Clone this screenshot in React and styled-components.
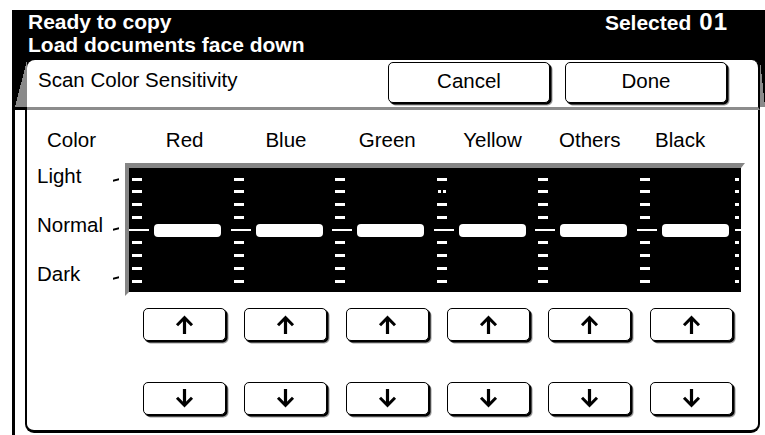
import React from "react";
import styled, { createGlobalStyle, css } from "styled-components";

const GlobalStyle = createGlobalStyle`
  html, body { margin: 0; padding: 0; background: #fff; }
  body { font-family: "Liberation Sans", Arial, Helvetica, sans-serif; color: #000; }
  * { box-sizing: border-box; }
`;

const bevel = css`
  background: #fff;
  border: 1.5px solid #000;
  border-radius: 5px;
  box-shadow: 1.5px 1.5px 0 #000, 2.5px 2.5px 0 #9a9a9a;
  font-family: inherit;
  color: #000;
  padding: 0;
  cursor: pointer;
  display: flex;
  align-items: center;
  justify-content: center;
`;

const Screen = styled.div`
  width: 765px;
  height: 435px;
  padding: 10px 0 0 12px;
  overflow: hidden;
  background: #fff;
`;

const Frame = styled.div`
  width: 753px;
  height: 425px;
  display: flex;
  flex-direction: column;
`;

const StatusBar = styled.header`
  height: 50px;
  flex-shrink: 0;
  background: #000;
  color: #fff;
  display: flex;
  justify-content: space-between;
  align-items: flex-start;
  padding: 0 37px 0 16px;
  font-weight: bold;
  font-size: 21px;
  line-height: 23px;
`;

const Messages = styled.div`
  display: flex;
  flex-direction: column;
`;

const Selected = styled.div`
  display: flex;
  align-items: baseline;
`;

const Count = styled.span`
  font-size: 24px;
  letter-spacing: 1px;
  margin-left: 8px;
`;

const TabArea = styled.div`
  height: 50px;
  flex-shrink: 0;
  display: flex;
  background: linear-gradient(#000 0 10px, #fff 10px);
`;

const LeftWedge = styled.div`
  width: 15px;
  height: 50px;
  border-left: 3px solid #000;
  border-bottom: 3px solid #000;
  background: linear-gradient(to bottom right, #000 50%, #8a8a8a 50%);
`;

const RightWedge = styled.div`
  width: 5px;
  height: 47px;
  background: linear-gradient(to bottom left, #000 50%, #8a8a8a 50%);
`;

const Tab = styled.div`
  width: 733px;
  height: 50px;
  background: #fff;
  border-right: 2px solid #000;
  border-bottom: 3px solid #8c8c8c;
  border-radius: 8px 8px 0 0;
  display: flex;
  align-items: flex-start;
  gap: 15px;
  padding: 0 31px 0 11px;
`;

const TabTitle = styled.div`
  flex: 1;
  font-size: 20.5px;
  line-height: 23px;
  padding-top: 8px;
`;

const TabButton = styled.button`
  ${bevel};
  width: 162px;
  height: 41px;
  margin-top: 1.5px;
  padding-bottom: 3px;
  font-size: 20.5px;
`;

const PanelArea = styled.div`
  flex: 1;
  display: flex;
  align-items: flex-start;
`;

const LeftStrip = styled.div`
  width: 13px;
  align-self: stretch;
  border-left: 3px solid #000;
`;

const Panel = styled.section`
  width: 735px;
  height: 323px;
  border: 2px solid #000;
  border-top: none;
  border-bottom-width: 3px;
  border-radius: 0 0 9px 9px;
  display: flex;
  flex-direction: column;
  padding-top: 18px;
  font-size: 20.5px;
`;

const HeaderRow = styled.div`
  display: flex;
  height: 23px;
  line-height: 23px;
`;

const CornerLabel = styled.div`
  width: 98px;
  padding-left: 20px;
`;

const ColumnGrid = styled.div`
  display: grid;
  grid-template-columns: repeat(6, 101.3px);
  margin-left: 9px;
`;

const ColumnHead = styled.div`
  text-align: center;
  padding-left: ${(p) => Math.max(0, 2 * (p.$shift || 0))}px;
  padding-right: ${(p) => Math.max(0, -2 * (p.$shift || 0))}px;
`;

const ScaleRow = styled.div`
  display: flex;
  margin-top: 12px;
`;

const RowLabels = styled.div`
  width: 98px;
  display: flex;
  flex-direction: column;
  gap: 26px;
  padding-top: 1px;
`;

const RowLabel = styled.div`
  height: 23px;
  line-height: 23px;
  display: flex;
  justify-content: space-between;
  padding: 0 6px 0 10px;
`;

const LevelMark = styled.span`
  align-self: flex-end;
  width: 6px;
  height: 2px;
  margin-bottom: 6px;
  background: #000;
  transform: skewY(-12deg);
`;

const SliderField = styled.div`
  width: 620px;
  height: 133px;
  border-top: 5px solid #858585;
  border-left: 4px solid #858585;
  border-right: 4px solid transparent;
  border-bottom: 4px solid transparent;
  background: #000;
  background-clip: padding-box;
  display: flex;
  align-items: center;
  overflow: hidden;
`;

const Unit = styled.div`
  width: 101.5px;
  flex-shrink: 0;
  display: flex;
  align-items: center;
`;

const Scale = styled.div`
  width: ${(p) => (p.$edge ? 6 : 20)}px;
  flex-shrink: 0;
  height: 105px;
  display: flex;
  flex-direction: column;
  justify-content: space-between;
  align-items: ${(p) => (p.$edge ? "flex-end" : "flex-start")};
  margin-left: ${(p) => (p.$edge ? "-3.5px" : "0")};
`;

const ScaleTick = styled.span`
  display: block;
  height: ${(p) => (p.$long ? 2 : 3)}px;
  width: ${(p) => (p.$long ? p.$len : p.$len / 2)}px;
  margin: ${(p) => (p.$long ? "0" : p.$edge ? "0 2px 0 0" : "0 0 0 3px")};
  background: ${(p) =>
    p.$broken
      ? "linear-gradient(to right, transparent 0 1px, #fff 1px 4px, transparent 4px 6px, #fff 6px 9px, transparent 9px)"
      : "#fff"};
`;

const SliderBar = styled.span`
  display: block;
  width: 67px;
  height: 13px;
  margin-left: 5px;
  border-radius: 4px;
  background: #fff;
`;

const ButtonRow = styled.div`
  display: grid;
  grid-template-columns: repeat(6, 101.3px);
  margin: ${(p) => p.$top}px 0 0 107px;
`;

const StepButton = styled.button`
  ${bevel};
  justify-self: center;
  width: 83px;
  height: 33px;
`;

const ArrowIcon = styled.svg`
  display: block;
  transform: ${(p) => (p.$down ? "scaleY(-1)" : "none")};
`;

const Arrow = ({ down }) => (
  <ArrowIcon width="19" height="19" viewBox="0 0 19 19" $down={down}>
    <path d="M9.5 3.5V19" stroke="#000" strokeWidth="3.2" fill="none" />
    <path d="M2 10.2L9.5 2.7l7.5 7.5" stroke="#000" strokeWidth="3" fill="none" strokeLinejoin="miter" />
  </ArrowIcon>
);

const colors = [
  { name: "Red" },
  { name: "Blue" },
  { name: "Green" },
  { name: "Yellow", shift: 4 },
  { name: "Others" },
  { name: "Black", shift: -11 },
];

const ticks = [0, 1, 2, 3, 4, 5, 6, 7, 8];

const ScaleTicks = ({ edge, broken }) => (
  <Scale $edge={edge}>
    {ticks.map((t) => (
      <ScaleTick
        key={t}
        $long={t === 4}
        $edge={edge}
        $len={edge ? (t === 4 ? 6 : 8) : 20}
        $broken={broken === t}
      />
    ))}
  </Scale>
);

export default function App() {
  return (
    <>
      <GlobalStyle />
      <Screen>
        <Frame>
          <StatusBar>
            <Messages>
              <span>Ready to copy</span>
              <span>Load documents face down</span>
            </Messages>
            <Selected>
              <span>Selected</span>
              <Count>01</Count>
            </Selected>
          </StatusBar>
          <TabArea>
            <LeftWedge />
            <Tab>
              <TabTitle>Scan Color Sensitivity</TabTitle>
              <TabButton>Cancel</TabButton>
              <TabButton>Done</TabButton>
            </Tab>
            <RightWedge />
          </TabArea>
          <PanelArea>
            <LeftStrip />
            <Panel>
              <HeaderRow>
                <CornerLabel>Color</CornerLabel>
                <ColumnGrid>
                  {colors.map((c) => (
                    <ColumnHead key={c.name} $shift={c.shift}>
                      {c.name}
                    </ColumnHead>
                  ))}
                </ColumnGrid>
              </HeaderRow>
              <ScaleRow>
                <RowLabels>
                  {["Light", "Normal", "Dark"].map((l) => (
                    <RowLabel key={l}>
                      <span>{l}</span>
                      <LevelMark />
                    </RowLabel>
                  ))}
                </RowLabels>
                <SliderField>
                  {colors.map((c, i) => (
                    <Unit key={c.name}>
                      <ScaleTicks broken={i === 3 ? 1 : -1} />
                      <SliderBar />
                    </Unit>
                  ))}
                  <ScaleTicks edge />
                </SliderField>
              </ScaleRow>
              <ButtonRow $top={12}>
                {colors.map((c) => (
                  <StepButton key={c.name} aria-label={`${c.name} lighter`}>
                    <Arrow />
                  </StepButton>
                ))}
              </ButtonRow>
              <ButtonRow $top={41}>
                {colors.map((c) => (
                  <StepButton key={c.name} aria-label={`${c.name} darker`}>
                    <Arrow down />
                  </StepButton>
                ))}
              </ButtonRow>
            </Panel>
          </PanelArea>
        </Frame>
      </Screen>
    </>
  );
}
